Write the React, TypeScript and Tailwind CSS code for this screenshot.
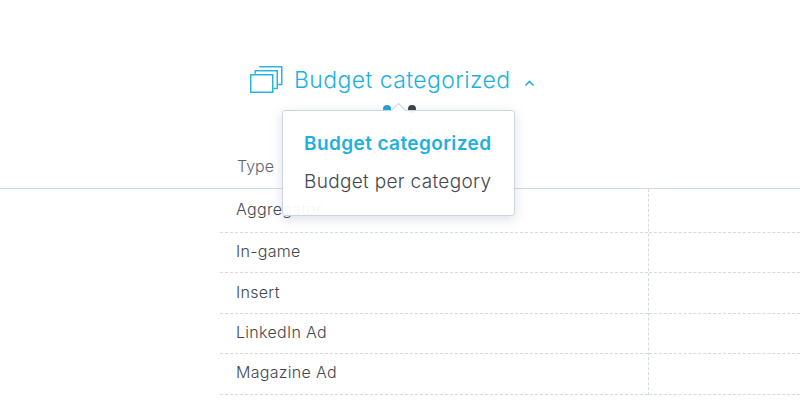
import React from 'react';

const rows = ['Aggregator', 'In-game', 'Insert', 'LinkedIn Ad', 'Magazine Ad'];

function StackIcon() {
  return (
    <svg width="33" height="27" viewBox="0 0 33 27" fill="none" stroke="#29b3e0" strokeWidth="1.5">
      <path d="M9.75 1V.75H31.75V18.5H28" />
      <path d="M5.25 7.75V4.75H27.25V22.5H23.5" />
      <rect x="0.75" y="8.75" width="22" height="17.5" />
    </svg>
  );
}

export default function App() {
  return (
    <div className="relative h-[400px] w-[800px] overflow-hidden bg-white font-['Inter',sans-serif] text-[#43474f]">
      {/* Title */}
      <div className="flex h-[105px] items-start pl-[250px] pt-[66px]">
        <StackIcon />
        <h1 className="ml-[11px] text-[23px] leading-[28px] font-light tracking-[0.4px] text-[#1fb0e0]">Budget categorized</h1>
        <svg className="ml-[14px] mt-[13px]" width="11" height="8" viewBox="0 0 11 8" fill="none" stroke="#1fb0e0" strokeWidth="1.6">
          <path d="M1.5 6.5 5.5 2.5 9.5 6.5" />
        </svg>
      </div>

      {/* Pager dots */}
      <div className="flex h-[8px] justify-center gap-[17px]">
        <span className="ml-[-2px] h-[8px] w-[8px] rounded-full bg-[#1fa5d6]" />
        <span className="h-[8px] w-[8px] rounded-full bg-[#3b4048]" />
      </div>

      {/* Table head */}
      <div className="h-[76px] border-b border-[#cfd8e3] pl-[237px] pt-[41px] text-[16px] leading-[24px] font-light text-[#5f636b]">
        Type
      </div>

      {/* Table rows */}
      <div className="ml-[220px] flex">
        <div className="w-[428px]">
          {rows.map((row, i) => (
            <div
              key={row}
              className={`flex items-center border-b border-dashed border-[#d3dae3] pb-[3px] pl-[16px] text-[16px] font-light tracking-[0.3px] ${i === 0 ? 'h-[44px]' : 'h-[40.4px]'}`}
            >
              {row}
            </div>
          ))}
        </div>
        <div className="flex-1 border-l border-dashed border-[#d3dae3]">
          {rows.map((row, i) => (
            <div key={row} className={`border-b border-dashed border-[#d3dae3] ${i === 0 ? 'h-[44px]' : 'h-[40.4px]'}`} />
          ))}
        </div>
      </div>

      {/* Dropdown */}
      <div className="absolute left-[282px] top-[110px] h-[106px] w-[233px] rounded-[3px] border border-[#ccd6e2] bg-white/95 pl-[21px] pt-[18px] text-[19px] shadow-[0_3px_12px_rgba(90,110,140,0.22)]">
        <div className="absolute left-[110px] top-[-6px] h-[11px] w-[11px] rotate-45 border-l border-t border-[#ccd6e2] bg-white" />
        <div className="h-[29px] leading-[29px] font-semibold tracking-[0.4px] text-[#1fb0e0]">Budget categorized</div>
        <div className="mt-[9px] h-[29px] leading-[29px] font-light tracking-[0.32px]">Budget per category</div>
      </div>
    </div>
  );
}
